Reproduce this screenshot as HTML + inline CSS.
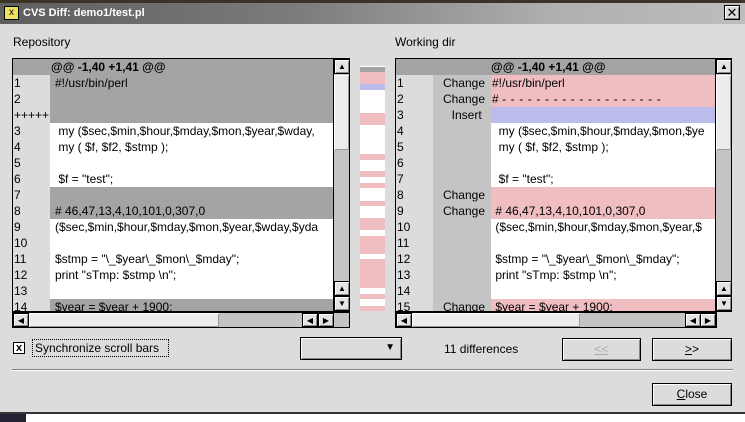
<!DOCTYPE html>
<html><head><style>
*{margin:0;padding:0;box-sizing:border-box}
body{width:745px;height:422px;overflow:hidden;background:#dcdcdc;font-family:"Liberation Sans",sans-serif;font-size:12px;position:relative;color:#000}
.a{position:absolute}
.title{left:0;top:3px;width:745px;height:21px;background:linear-gradient(90deg,#5e5e5e 0%,#7c7c7c 40%,#b0b0b0 75%,#bdbdbd 100%);color:#fff;font-weight:bold;font-size:11px;line-height:20px;padding-left:23px}
.row{position:absolute;height:16px;line-height:16px;white-space:nowrap;overflow:hidden}
.sb{background:#c4c4c4;border:1px solid #000}
.btn{background:#dcdcdc;border:1px solid #000;box-shadow:inset 1px 1px 0 #fff,inset -1px -1px 0 #888}
.arr{position:absolute;width:16px;height:15px;background:#e4e4e4;border:1px solid #000;box-shadow:inset 1px 1px 0 #fff,inset -1px -1px 0 #888;font-size:8px;text-align:center;line-height:13px}
.thumb{position:absolute;background:#ececec;box-shadow:inset 1px 1px 0 #fff,inset -1px -1px 0 #999}
</style></head><body>
<div class="a" style="left:0;top:0;width:745px;height:3px;background:#3a3426"></div>
<div class="a title">CVS Diff: demo1/test.pl</div>
<div class="a" style="left:4px;top:6px;width:15px;height:14px;background:#f0e060;border:1px solid #000;font-size:10px;line-height:12px;text-align:center;color:#000">x</div>
<div class="a btn" style="left:724px;top:5px;width:16px;height:15px;font-size:13px;line-height:13px;text-align:center">✕</div>

<div class="a" style="left:13px;top:35px">Repository</div>
<div class="a" style="left:395px;top:35px">Working dir</div>

<!-- left pane -->
<div class="a" style="left:12px;top:58px;width:322px;height:254px;border:1px solid #000;border-right:none;background:#fff;overflow:hidden">
 <div class="a" style="left:0;top:0;width:37px;height:254px;background:#dcdcdc"></div>
 <div class="row" style="left:0;top:0;width:322px;background:#a4a4a4;font-weight:bold;padding-left:38px">@@ -1,40 +1,41 @@</div>
 <div class="row" style="left:37px;top:16px;width:285px;height:48px;background:#a4a4a4"></div>
 <div class="row" style="left:37px;top:128px;width:285px;height:32px;background:#a4a4a4"></div>
 <div class="row" style="left:37px;top:240px;width:285px;background:#a4a4a4"></div>
 <div style="position:absolute;left:1px;top:16px;line-height:16px">1<br>2<br>+++++<br>3<br>4<br>5<br>6<br>7<br>8<br>9<br>10<br>11<br>12<br>13<br>14</div>
 <div style="position:absolute;left:42px;top:16px;line-height:16px;white-space:pre">#!/usr/bin/perl


 my ($sec,$min,$hour,$mday,$mon,$year,$wday,
 my ( $f, $f2, $stmp );

 $f = "test";

# 46,47,13,4,10,101,0,307,0
($sec,$min,$hour,$mday,$mon,$year,$wday,$yda

$stmp = "\_$year\_$mon\_$mday";
print "sTmp: $stmp \n";

$year = $year + 1900;</div>
</div>
<div class="a sb" style="left:333px;top:58px;width:17px;height:254px">
 <div class="arr" style="left:0;top:0">▲</div>
 <div class="thumb" style="left:0;top:16px;width:15px;height:75px"></div>
 <div class="arr" style="left:0;top:222px">▲</div>
 <div class="arr" style="left:0;top:237px">▼</div>
</div>
<div class="a sb" style="left:12px;top:312px;width:338px;height:16px">
 <div class="arr" style="left:0;top:0;width:16px;height:14px">◀</div>
 <div class="thumb" style="left:16px;top:0;width:190px;height:14px"></div>
 <div class="arr" style="left:289px;top:0;width:16px;height:14px">◀</div>
 <div class="arr" style="left:305px;top:0;width:16px;height:14px">▶</div>
</div>

<!-- middle strip -->
<div class="a" style="left:360px;top:66px;width:25px;height:245px;background:#fff">
 <div class="a" style="left:0;top:1px;width:25px;height:5px;background:#a4a4a4"></div>
 <div class="a" style="left:0;top:6px;width:25px;height:12px;background:#f0bec0"></div>
 <div class="a" style="left:0;top:18px;width:25px;height:6px;background:#bcbcec"></div>
 <div class="a" style="left:0;top:47px;width:25px;height:12px;background:#f0bec0"></div>
 <div class="a" style="left:0;top:88px;width:25px;height:6px;background:#f0bec0"></div>
 <div class="a" style="left:0;top:105px;width:25px;height:6px;background:#f0bec0"></div>
 <div class="a" style="left:0;top:117px;width:25px;height:5px;background:#f0bec0"></div>
 <div class="a" style="left:0;top:135px;width:25px;height:5px;background:#f0bec0"></div>
 <div class="a" style="left:0;top:152px;width:25px;height:12px;background:#f0bec0"></div>
 <div class="a" style="left:0;top:170px;width:25px;height:18px;background:#f0bec0"></div>
 <div class="a" style="left:0;top:193px;width:25px;height:29px;background:#f0bec0"></div>
 <div class="a" style="left:0;top:228px;width:25px;height:5px;background:#f0bec0"></div>
 <div class="a" style="left:0;top:240px;width:25px;height:5px;background:#f0bec0"></div>
</div>

<!-- right pane -->
<div class="a" style="left:395px;top:58px;width:321px;height:254px;border:1px solid #000;border-right:none;background:#fff;overflow:hidden">
 <div class="a" style="left:0;top:0;width:37px;height:254px;background:#dcdcdc"></div>
 <div class="a" style="left:37px;top:0;width:58px;height:254px;background:#c4c4c4"></div>
 <div class="row" style="left:0;top:0;width:321px;background:#a4a4a4;font-weight:bold;padding-left:95px">@@ -1,40 +1,41 @@</div>
 <div class="row" style="left:95px;top:16px;width:226px;height:32px;background:#f0bec0"></div>
 <div class="row" style="left:95px;top:48px;width:226px;background:#bcbcec"></div>
 <div class="row" style="left:95px;top:128px;width:226px;height:32px;background:#f0bec0"></div>
 <div class="row" style="left:95px;top:240px;width:226px;background:#f0bec0"></div>
 <div style="position:absolute;left:1px;top:16px;line-height:16px">1<br>2<br>3<br>4<br>5<br>6<br>7<br>8<br>9<br>10<br>11<br>12<br>13<br>14<br>15</div>
 <div style="position:absolute;left:37px;top:16px;width:52px;text-align:right;line-height:16px">Change<br>Change<br>Insert&nbsp;<br><br><br><br><br>Change<br>Change<br><br><br><br><br><br>Change</div>
 <div style="position:absolute;left:96px;top:16px;line-height:16px;white-space:pre">#!/usr/bin/perl
# <span style="letter-spacing:4.6px">-------------------</span>

  my ($sec,$min,$hour,$mday,$mon,$ye
  my ( $f, $f2, $stmp );

  $f = "test";

 # 46,47,13,4,10,101,0,307,0
 ($sec,$min,$hour,$mday,$mon,$year,$

 $stmp = "\_$year\_$mon\_$mday";
 print "sTmp: $stmp \n";

 $year = $year + 1900;</div>
</div>
<div class="a sb" style="left:715px;top:58px;width:17px;height:254px">
 <div class="arr" style="left:0;top:0">▲</div>
 <div class="thumb" style="left:0;top:16px;width:15px;height:75px"></div>
 <div class="arr" style="left:0;top:222px">▲</div>
 <div class="arr" style="left:0;top:237px">▼</div>
</div>
<div class="a sb" style="left:395px;top:312px;width:322px;height:16px">
 <div class="arr" style="left:0;top:0;width:16px;height:14px">◀</div>
 <div class="thumb" style="left:16px;top:0;width:168px;height:14px"></div>
 <div class="arr" style="left:289px;top:0;width:16px;height:14px">◀</div>
 <div class="arr" style="left:304px;top:0;width:16px;height:14px">▶</div>
</div>

<!-- bottom controls -->
<div class="a" style="left:13px;top:342px;width:12px;height:12px;background:#fff;border:1px solid #000;font-size:11px;line-height:10px;text-align:center;font-weight:bold">x</div>
<div class="a" style="left:32px;top:339px;width:137px;height:18px;border:1px dotted #000;line-height:16px;padding-left:2px">Synchronize scroll bars</div>
<div class="a btn" style="left:300px;top:337px;width:102px;height:23px"><span style="position:absolute;right:6px;top:4px;font-size:10px">▼</span></div>
<div class="a" style="left:444px;top:342px">11 differences</div>
<div class="a btn" style="left:562px;top:338px;width:79px;height:23px;text-align:center;line-height:21px;color:#aaa"><u>&lt;&lt;</u></div>
<div class="a btn" style="left:652px;top:338px;width:80px;height:23px;text-align:center;line-height:21px"><u>&gt;</u>&gt;</div>
<div class="a" style="left:12px;top:369px;width:721px;height:2px;border-top:1px solid #808080;border-bottom:1px solid #fff"></div>
<div class="a btn" style="left:652px;top:383px;width:80px;height:23px;text-align:center;line-height:21px"><u>C</u>lose</div>
<div class="a" style="left:0;top:412px;width:745px;height:2px;background:#333"></div>
<div class="a" style="left:0;top:414px;width:745px;height:8px;background:#fff"></div>
<div class="a" style="left:0;top:414px;width:26px;height:8px;background:#223"></div>
</body></html>
